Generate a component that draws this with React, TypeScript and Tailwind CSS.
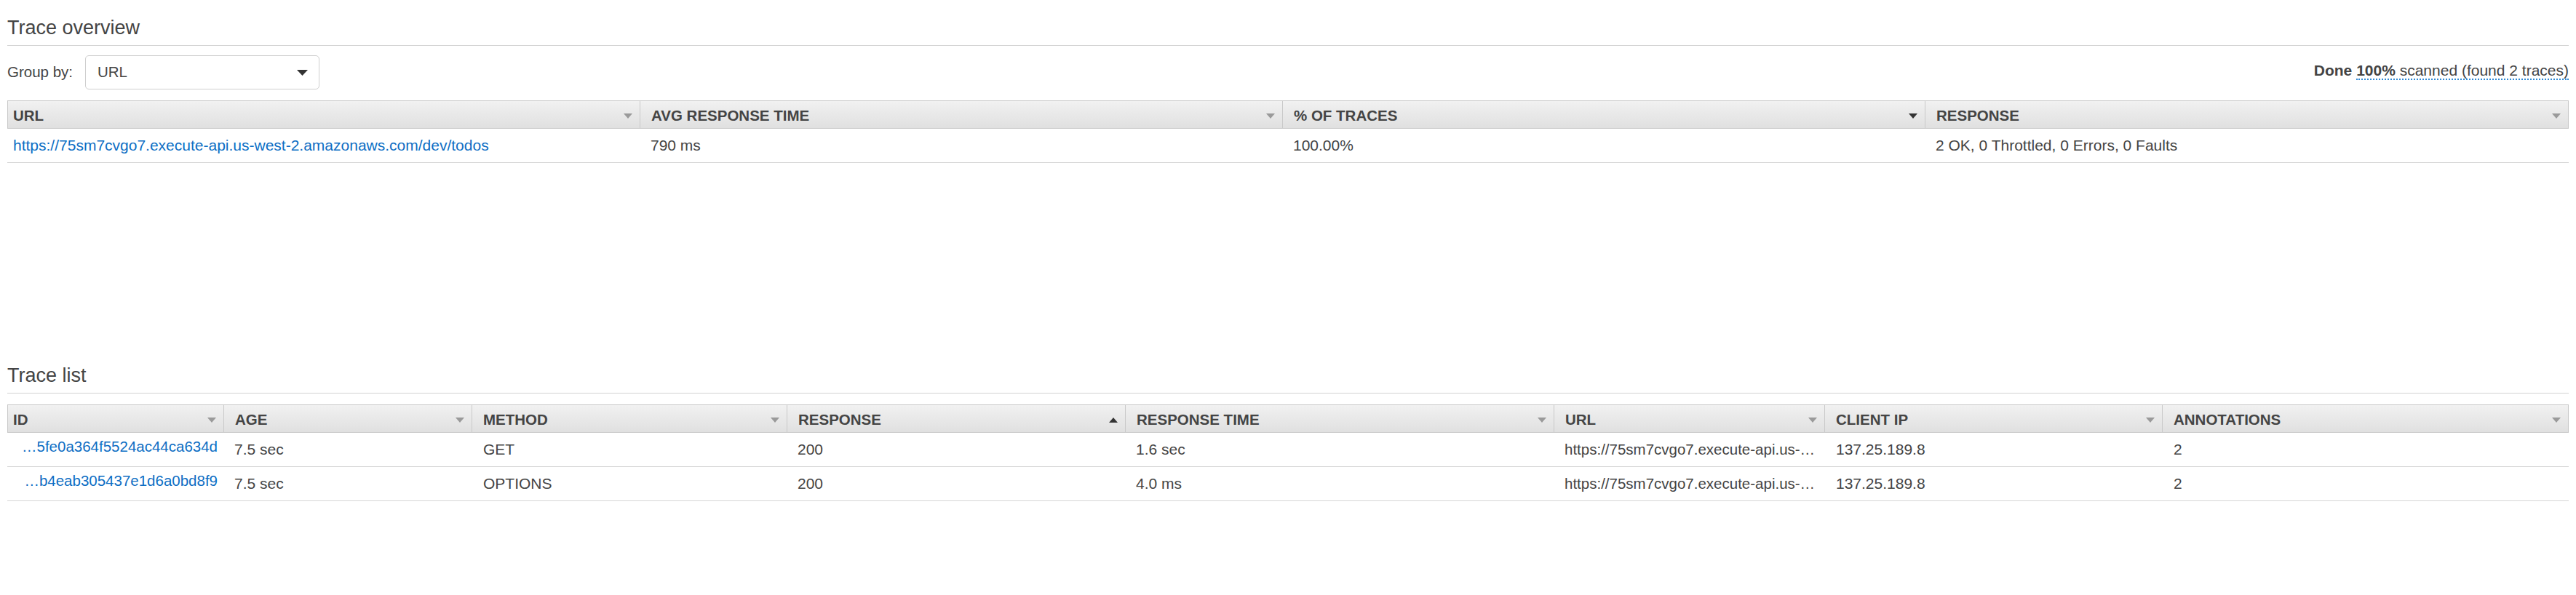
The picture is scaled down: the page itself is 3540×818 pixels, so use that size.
type Sort = "none" | "asc" | "desc";

interface Column {
  label: string;
  sort: Sort;
}

const overviewColumns: Column[] = [
  { label: "URL", sort: "none" },
  { label: "Avg response time", sort: "none" },
  { label: "% of traces", sort: "desc" },
  { label: "Response", sort: "none" },
];

const traceColumns: Column[] = [
  { label: "ID", sort: "none" },
  { label: "Age", sort: "none" },
  { label: "Method", sort: "none" },
  { label: "Response", sort: "asc" },
  { label: "Response time", sort: "none" },
  { label: "URL", sort: "none" },
  { label: "Client IP", sort: "none" },
  { label: "Annotations", sort: "none" },
];

const traces = [
  {
    id: "…5fe0a364f5524ac44ca634d",
    age: "7.5 sec",
    method: "GET",
    response: "200",
    time: "1.6 sec",
    url: "https://75sm7cvgo7.execute-api.us-…",
    ip: "137.25.189.8",
    annotations: "2",
  },
  {
    id: "…b4eab305437e1d6a0bd8f9",
    age: "7.5 sec",
    method: "OPTIONS",
    response: "200",
    time: "4.0 ms",
    url: "https://75sm7cvgo7.execute-api.us-…",
    ip: "137.25.189.8",
    annotations: "2",
  },
];

const overviewGrid = "grid grid-cols-[868px_883px_883px_1fr]";
const traceGrid =
  "grid grid-cols-[296px_341px_433px_465px_589px_372px_464px_1fr]";

function SortArrow({ sort }: { sort: Sort }) {
  if (sort === "asc") {
    return (
      <svg width="12" height="7" viewBox="0 0 12 7" className="shrink-0">
        <path d="M0 7 L6 0 L12 7 Z" fill="#333333" />
      </svg>
    );
  }
  return (
    <svg width="12" height="7" viewBox="0 0 12 7" className="shrink-0">
      <path
        d="M0 0 L12 0 L6 7 Z"
        fill={sort === "desc" ? "#333333" : "#9a9a9a"}
      />
    </svg>
  );
}

function TableHeader({ columns, grid }: { columns: Column[]; grid: string }) {
  return (
    <div
      className={`${grid} border border-[#c9c9c9] bg-linear-to-b from-[#f1f1f1] to-[#e0e0e0] text-[20.5px]`}
    >
      {columns.map((col, idx) => (
        <div
          key={idx}
          className={
            idx === 0
              ? "flex h-[37px] items-center justify-between pt-[3px] pr-[10px] pl-[7px]"
              : "flex h-[37px] items-center justify-between border-l border-[#c9c9c9] pt-[3px] pr-[10px] pl-[15px]"
          }
        >
          <span className="font-bold uppercase text-[#444444]">
            {col.label}
          </span>
          <SortArrow sort={col.sort} />
        </div>
      ))}
    </div>
  );
}

function SectionTitle({ title }: { title: string }) {
  return (
    <div className="border-b border-[#d3d3d3] pt-[22px] pb-[8px]">
      <h2 className="text-[27px] leading-[32px] text-[#444444]">{title}</h2>
    </div>
  );
}

export default function App() {
  return (
    <div className="min-h-[818px] bg-white px-[10px] font-['Liberation_Sans',Arial,sans-serif] text-[21px] text-[#444444]">
      <section className="h-[478px]">
        <SectionTitle title="Trace overview" />

        <div className="mt-[13px] mb-[15px] flex items-start justify-between">
          <div className="flex items-center text-[20.5px]">
            <span className="w-[107px]">Group by:</span>
            <div className="flex h-[47px] w-[322px] items-center justify-between rounded-[5px] border border-[#cfcfcf] pr-[15px] pl-[16px]">
              <span>URL</span>
              <svg width="15" height="8" viewBox="0 0 15 8">
                <path d="M0 0 L15 0 L7.5 8 Z" fill="#333333" />
              </svg>
            </div>
          </div>
          <div className="mt-[5px] whitespace-nowrap text-[21px]">
            <span className="font-bold">Done </span>
            <span className="border-b-2 border-dotted border-[#2f8ad6]">
              <span className="font-bold">100%</span> scanned (found 2 traces)
            </span>
          </div>
        </div>

        <TableHeader columns={overviewColumns} grid={overviewGrid} />
        <div
          className={`${overviewGrid} h-[47px] items-center border-b border-[#d6d6d6]`}
        >
          <span className="truncate pl-[8px] text-[#0d6ec4]">
            https://75sm7cvgo7.execute-api.us-west-2.amazonaws.com/dev/todos
          </span>
          <span className="pl-[16px]">790 ms</span>
          <span className="pl-[16px]">100.00%</span>
          <span className="pl-[16px]">2 OK, 0 Throttled, 0 Errors, 0 Faults</span>
        </div>
      </section>

      <section>
        <SectionTitle title="Trace list" />
        <div className="mt-[15px]">
          <TableHeader columns={traceColumns} grid={traceGrid} />
          {traces.map((t, idx) => (
            <div
              key={idx}
              className={`${traceGrid} h-[47px] items-center border-b border-[#d6d6d6]`}
            >
              <span className="truncate pr-[7px] pb-[7px] text-right text-[20.5px] text-[#0d6ec4]">
                {t.id}
              </span>
              <span className="pl-[16px]">{t.age}</span>
              <span className="pl-[17px]">{t.method}</span>
              <span className="pl-[16px]">{t.response}</span>
              <span className="pl-[16px]">{t.time}</span>
              <span className="truncate pr-[4px] pl-[16px] text-[20.5px]">
                {t.url}
              </span>
              <span className="pl-[17px]">{t.ip}</span>
              <span className="pl-[17px]">{t.annotations}</span>
            </div>
          ))}
        </div>
      </section>
    </div>
  );
}
